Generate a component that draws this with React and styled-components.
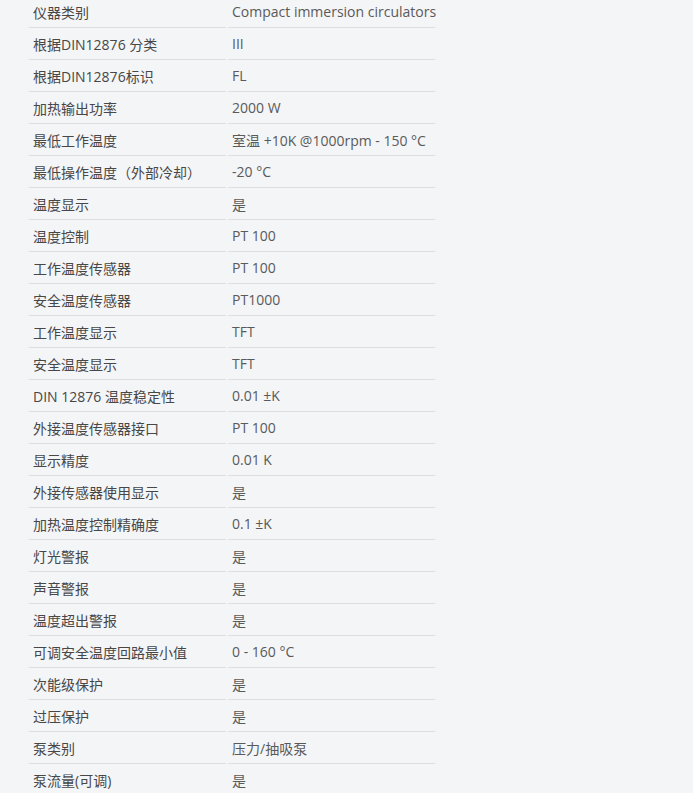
import React from "react";
import styled, { createGlobalStyle } from "styled-components";

const GlobalStyle = createGlobalStyle`
    html, body {
        margin: 0;
        padding: 0;
        background-color: #f4f5f7;
    }
    body {
        font-family: "Open Sans", "Noto Sans CJK SC", sans-serif;
    }
`;

const SpecTable = styled.div`
    display: grid;
    grid-template-columns: 197px 207px;
    column-gap: 2px;
    padding-left: 29px;
    margin-top: -4px;
`;

const Cell = styled.div`
    height: 31px;
    display: flex;
    align-items: center;
    padding-left: 4px;
    border-bottom: 1px solid #dcdee1;
    font-size: 14px;
    color: ${(p) => (p.$label ? "#474747" : "#5a5a5a")};
    white-space: nowrap;
`;

const specs = [
    ["仪器类别", "Compact immersion circulators"],
    ["根据DIN12876 分类", "III"],
    ["根据DIN12876标识", "FL"],
    ["加热输出功率", "2000 W"],
    ["最低工作温度", "室温 +10K @1000rpm - 150 °C"],
    ["最低操作温度（外部冷却）", "-20 °C"],
    ["温度显示", "是"],
    ["温度控制", "PT 100"],
    ["工作温度传感器", "PT 100"],
    ["安全温度传感器", "PT1000"],
    ["工作温度显示", "TFT"],
    ["安全温度显示", "TFT"],
    ["DIN 12876 温度稳定性", "0.01 ±K"],
    ["外接温度传感器接口", "PT 100"],
    ["显示精度", "0.01 K"],
    ["外接传感器使用显示", "是"],
    ["加热温度控制精确度", "0.1 ±K"],
    ["灯光警报", "是"],
    ["声音警报", "是"],
    ["温度超出警报", "是"],
    ["可调安全温度回路最小值", "0 - 160 °C"],
    ["次能级保护", "是"],
    ["过压保护", "是"],
    ["泵类别", "压力/抽吸泵"],
    ["泵流量(可调)", "是"],
];

export default function App() {
    return (
        <>
            <GlobalStyle />
            <SpecTable>
                {specs.map(([label, value]) => (
                    <React.Fragment key={label}>
                        <Cell $label>{label}</Cell>
                        <Cell>{value}</Cell>
                    </React.Fragment>
                ))}
            </SpecTable>
        </>
    );
}
